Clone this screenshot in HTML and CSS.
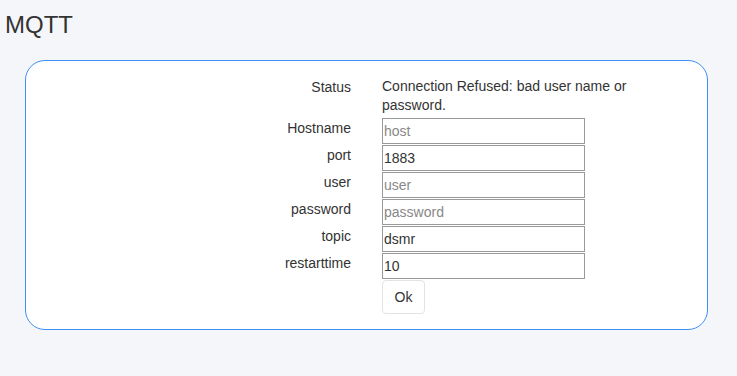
FILE: index.html
```html
<!DOCTYPE html>
<html lang="en">
<head>
    <meta charset="UTF-8">
    <meta name="viewport" content="width=device-width, initial-scale=1.0">
    <title>MQTT</title>
    <link rel="stylesheet" href="styles.css">
</head>
<body>
    <h1>MQTT</h1>

    <div class="card">
        <form class="settings">
            <label>Status</label>
            <div class="status">Connection Refused: bad user name or password.</div>

            <label for="host">Hostname</label>
            <div><input id="host" type="text" placeholder="host"></div>

            <label for="port">port</label>
            <div><input id="port" type="text" value="1883"></div>

            <label for="user">user</label>
            <div><input id="user" type="text" placeholder="user"></div>

            <label for="password">password</label>
            <div><input id="password" type="password" placeholder="password"></div>

            <label for="topic">topic</label>
            <div><input id="topic" type="text" value="dsmr"></div>

            <label for="restart">restarttime</label>
            <div><input id="restart" type="text" value="10"></div>

            <span></span>
            <div><button type="button">Ok</button></div>
        </form>
    </div>
</body>
</html>
```

FILE: styles.css
```css
* {
    margin: 0;
    padding: 0;
    box-sizing: border-box;
    font-family: "Liberation Sans", Arial, sans-serif;
}

body {
    background: #f5f6fa;
    color: #333;
    font-size: 14px;
}

h1 {
    font-size: 24px;
    font-weight: normal;
    line-height: 28px;
    padding: 11px 5px 0;
    color: #333;
}

.card {
    width: 683px;
    margin: 21px 0 0 25px;
    background: #fff;
    border: 1px solid #3d8ff5;
    border-radius: 20px;
    padding: 16px 20px 15px;
}

.settings {
    display: grid;
    grid-template-columns: 1fr 1fr;
    column-gap: 31px;
    row-gap: 1px;
    line-height: 20px;
}

.settings label {
    text-align: right;
}

.status {
    line-height: 19px;
    margin-bottom: 2px;
}

input {
    display: block;
    width: 203px;
    height: 26px;
    padding: 0 1px;
    border: 1px solid #999;
    border-radius: 0;
    font-size: 14px;
    color: #333;
    background: #fff;
    outline: none;
}

input::placeholder {
    color: #888;
}

button {
    width: 43px;
    height: 34px;
    background: #fff;
    border: 1px solid #e3e3e3;
    border-radius: 4px;
    font-size: 14px;
    color: #333;
    cursor: pointer;
}
```
